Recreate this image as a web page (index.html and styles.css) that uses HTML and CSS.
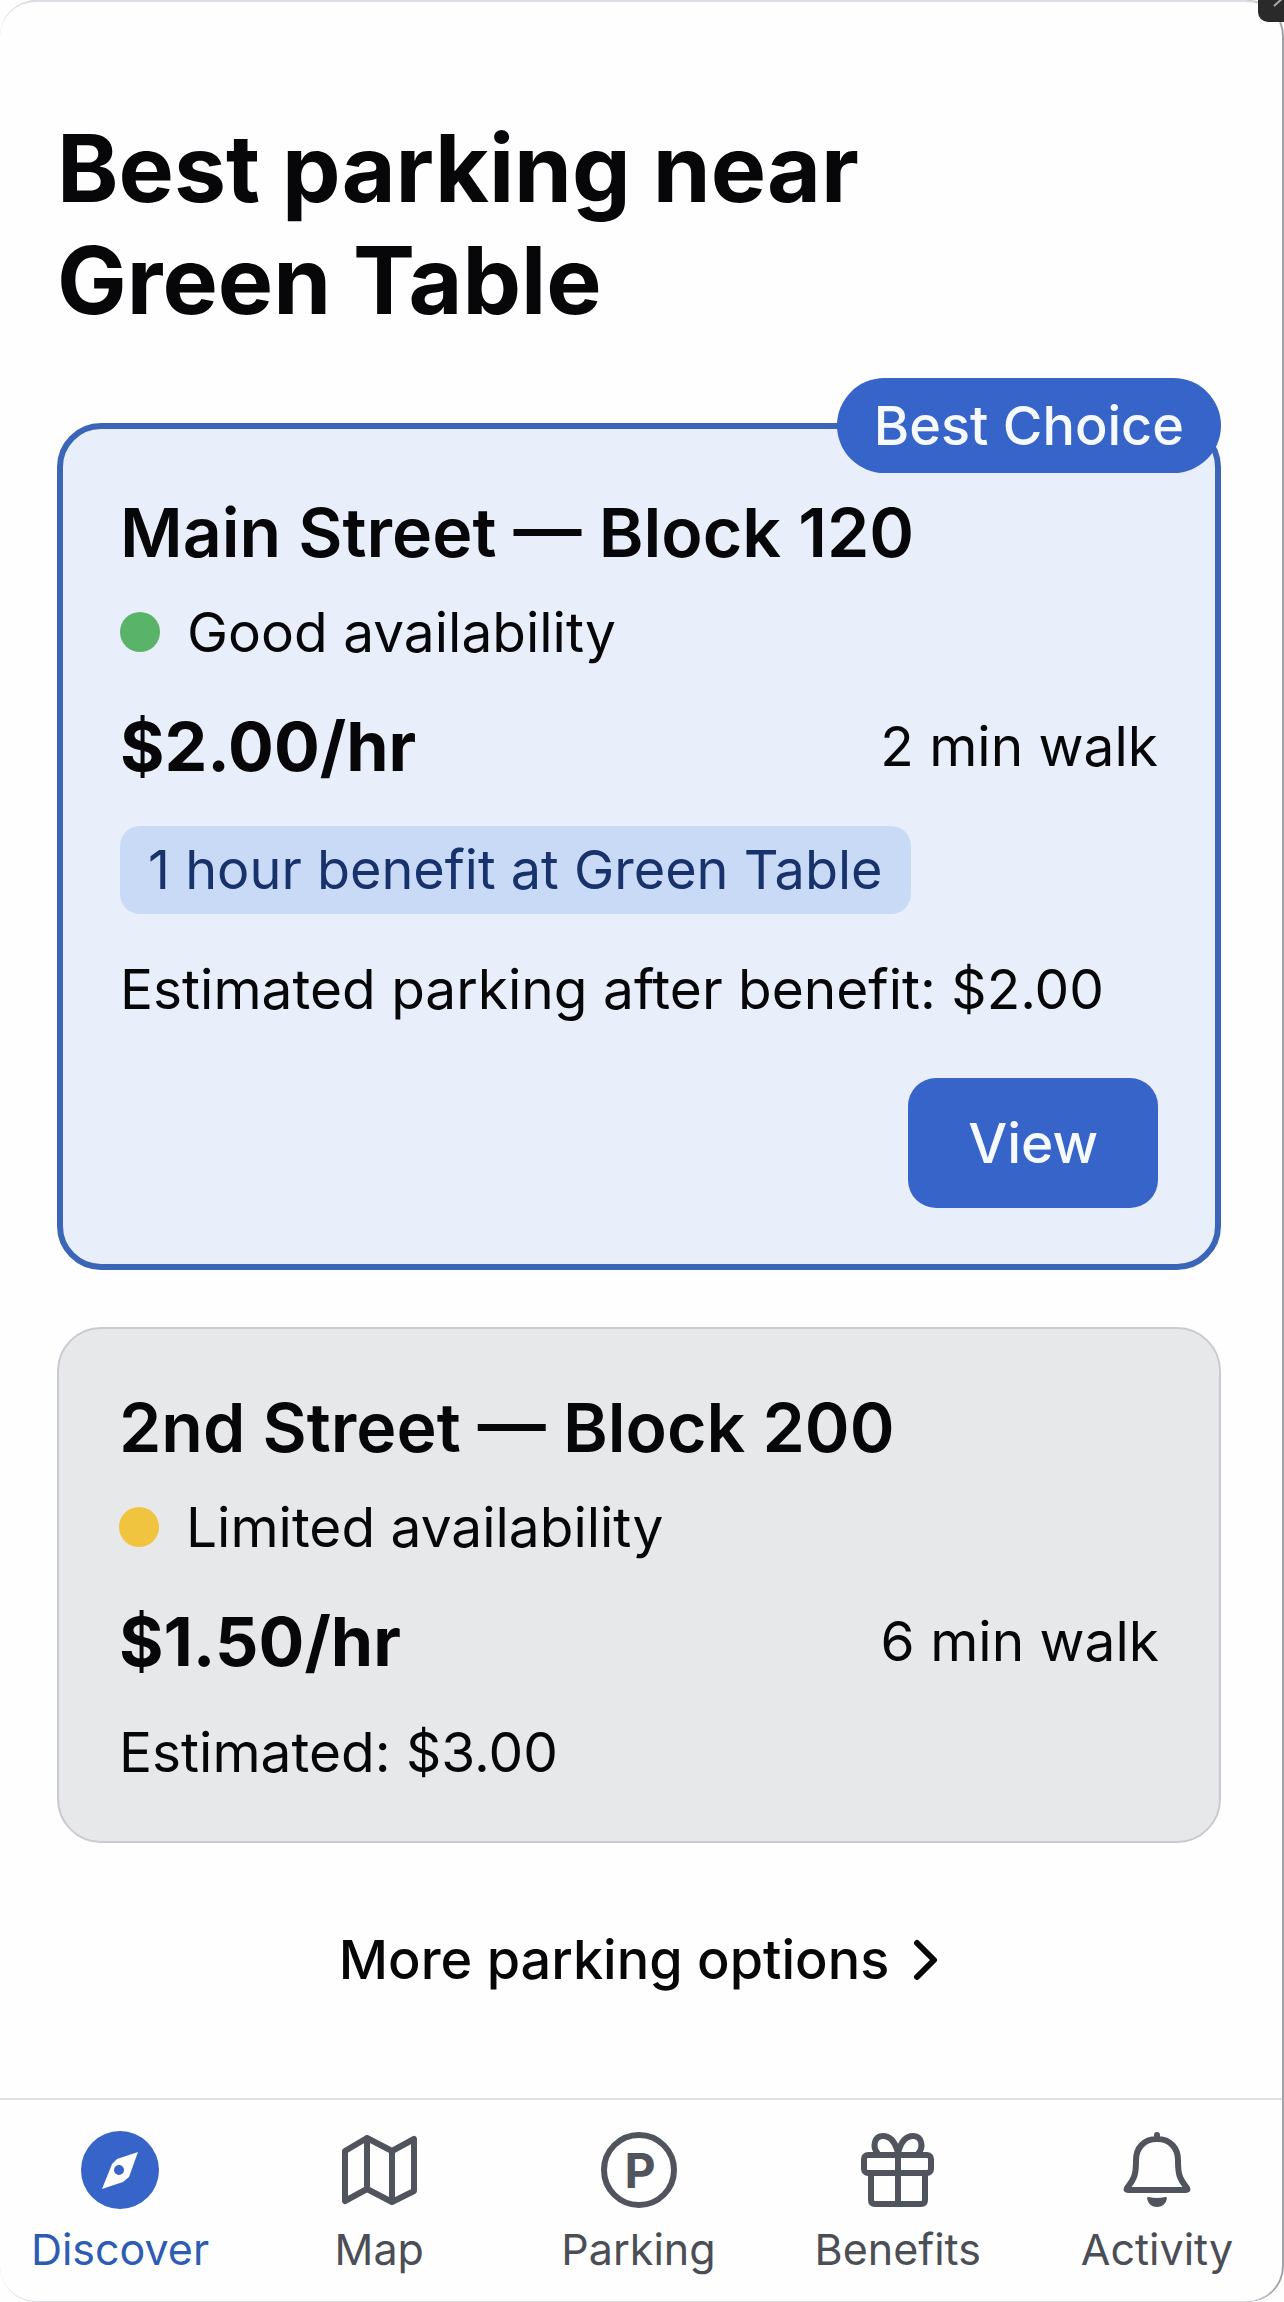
FILE: index.html
```html
<!DOCTYPE html>
<html lang="en">
<head>
    <meta charset="UTF-8">
    <meta name="viewport" content="width=device-width, initial-scale=1.0">
    <title>Best parking near Green Table</title>
    <link rel="stylesheet" href="styles.css">
</head>
<body>
    <div class="screen">
        <main class="content">
            <h1>Best parking near<br>Green Table</h1>

            <section class="card card-best">
                <span class="badge">Best Choice</span>
                <h2>Main Street — Block 120</h2>
                <p class="availability"><span class="dot dot-good"></span>Good availability</p>
                <div class="price-row">
                    <strong class="price">$2.00/hr</strong>
                    <span>2 min walk</span>
                </div>
                <p class="benefit">1 hour benefit at Green Table</p>
                <p>Estimated parking after benefit: $2.00</p>
                <button type="button" class="view-btn">View</button>
            </section>

            <section class="card">
                <h2>2nd Street — Block 200</h2>
                <p class="availability"><span class="dot dot-limited"></span>Limited availability</p>
                <div class="price-row">
                    <strong class="price">$1.50/hr</strong>
                    <span>6 min walk</span>
                </div>
                <p class="estimate">Estimated: $3.00</p>
            </section>

            <a href="#" class="more">
                More parking options
                <svg class="chevron" viewBox="0 0 26 42" aria-hidden="true"><path d="M4 4l17 17L4 38"/></svg>
            </a>
        </main>

        <nav class="tabs">
            <a href="#" class="tab active">
                <svg viewBox="0 0 78 78" aria-hidden="true">
                    <circle class="fill" cx="39" cy="39" r="39"/>
                    <path class="needle" d="M57 21L48 46 42 51 21 58 31 33 36 28z"/>
                    <circle class="fill" cx="38" cy="39" r="5"/>
                </svg>
                Discover
            </a>
            <a href="#" class="tab">
                <svg viewBox="0 0 78 78" aria-hidden="true">
                    <path d="M5 20L27 7l25 13L74 8v52L52 71 27 58 5 70zM27 7v51M52 20v51"/>
                </svg>
                Map
            </a>
            <a href="#" class="tab">
                <svg viewBox="0 0 78 78" aria-hidden="true">
                    <circle cx="39" cy="39" r="35"/>
                    <text class="letter" x="40" y="57" text-anchor="middle">P</text>
                </svg>
                Parking
            </a>
            <a href="#" class="tab">
                <svg viewBox="0 0 78 78" aria-hidden="true">
                    <rect x="5" y="24" width="67" height="18" rx="4"/>
                    <path d="M12 42v27q0 4 4 4h46q4 0 4-4V42M39 24v49M39 22C36 10 30 5 24 5c-9 0-11 11-5 18M39 22C42 10 48 5 54 5c9 0 11 11 5 18"/>
                </svg>
                Benefits
            </a>
            <a href="#" class="tab">
                <svg viewBox="0 0 78 78" aria-hidden="true">
                    <path d="M39 4v4M39 8C25 8 18 18 18 29c0 14-1 18-9 28-1 2 0 2 1 2h58c1 0 2 0 1-2-8-10-9-14-9-28C60 18 53 8 39 8z"/>
                    <path class="fill" d="M29 67q0-1 2-1 8 2 16 0 2 0 2 1c-1 6-5 9-10 9s-9-3-10-9z"/>
                </svg>
                Activity
            </a>
        </nav>
    </div>
    <div class="corner">
        <svg viewBox="0 0 26 22" aria-hidden="true"><path d="M16 6l10-9"/></svg>
    </div>
</body>
</html>
```
FILE: styles.css
```css
* {
    box-sizing: border-box;
}
body {
    margin: 0;
    font-family: Inter, "Liberation Sans", sans-serif;
    font-size: 55px;
    line-height: 72px;
    color: #070709;
    background: #fefefe;
}
h1, h2, p {
    margin: 0;
}
a {
    color: inherit;
    text-decoration: none;
}
.screen {
    display: flex;
    flex-direction: column;
    min-height: 100vh;
    margin-right: 2px;
    background: #fefefe;
    border-top: 2px solid #dcdee4;
    border-bottom: 1px solid #dcdee4;
    border-radius: 36px;
    box-shadow: 2px 0 0 #a0a2a8;
}
.content {
    flex: 1;
    display: flex;
    flex-direction: column;
    padding: 110px 61px 0 57px;
}
h1 {
    margin-bottom: 87px;
    font-size: 93px;
    font-weight: 700;
    line-height: 112px;
}
h2 {
    font-size: 68px;
    font-weight: 600;
    line-height: 84px;
}

/* parking cards */
.card {
    position: relative;
    display: flex;
    flex-direction: column;
    align-items: flex-start;
    padding: 56px 60px 53px;
    background: #e7e8ea;
    border: 2px solid #c9cad2;
    border-radius: 44px;
}
.card-best {
    margin-bottom: 57px;
    padding: 61px 57px 56px;
    background: #e8eefa;
    border: 6px solid #3b66b8;
}
.badge {
    position: absolute;
    top: -51px;
    right: -6px;
    padding: 0 37px;
    font-size: 54px;
    font-weight: 500;
    line-height: 95px;
    color: #f6faff;
    background: #3664c8;
    border-radius: 48px;
}
.availability {
    display: flex;
    align-items: center;
    gap: 27px;
    margin-top: 22px;
}
.dot {
    width: 40px;
    height: 40px;
    border-radius: 50%;
}
.dot-good {
    background: #59b368;
}
.dot-limited {
    background: #f1c440;
}
.price-row {
    display: flex;
    align-items: center;
    justify-content: space-between;
    align-self: stretch;
    margin-top: 36px;
}
.price {
    font-size: 68px;
    font-weight: 700;
    line-height: 84px;
}
.benefit {
    margin: 38px 0 39px;
    padding: 8px 28px;
    font-size: 54px;
    color: #18326c;
    background: #c9daf7;
    border-radius: 20px;
}
.estimate {
    margin-top: 33px;
}
.view-btn {
    align-self: flex-end;
    margin-top: 53px;
    padding: 29px 60px;
    font: inherit;
    font-weight: 500;
    color: #f6faff;
    background: #3664c8;
    border: none;
    border-radius: 28px;
    cursor: pointer;
}
.more {
    display: flex;
    align-items: center;
    justify-content: center;
    gap: 24px;
    margin-top: 81px;
    font-size: 54px;
    font-weight: 500;
}
.chevron {
    width: 26px;
    height: 42px;
    fill: none;
    stroke: currentColor;
    stroke-width: 6;
    stroke-linecap: round;
    stroke-linejoin: round;
}

/* bottom tab bar */
.tabs {
    display: flex;
    justify-content: space-between;
    padding: 31px 35px 24px 30px;
    border-top: 2px solid #dfe0e6;
}
.tab {
    display: flex;
    flex-direction: column;
    align-items: center;
    gap: 12px;
    width: 180px;
    font-size: 43px;
    line-height: 56px;
    color: #4b4e55;
}
.tab svg {
    width: 78px;
    height: 78px;
    fill: none;
    stroke: #50545d;
    stroke-width: 6;
    stroke-linecap: round;
    stroke-linejoin: round;
}
.tab .fill {
    fill: #50545d;
    stroke: none;
}
.tab .letter {
    font-size: 48px;
    font-weight: 700;
    fill: #50545d;
    stroke: none;
}
.active {
    color: #2c5cb4;
}
.active .fill {
    fill: #3664c8;
}
.active .needle {
    fill: #fefefe;
    stroke: none;
}

/* dark control peeking in over the corner */
.corner {
    position: absolute;
    top: 0;
    right: 0;
    width: 26px;
    height: 22px;
    background: #2a2a2a;
    border-bottom-left-radius: 10px;
}
.corner svg {
    display: block;
    stroke: #aaaaaa;
    stroke-width: 2;
}
```
